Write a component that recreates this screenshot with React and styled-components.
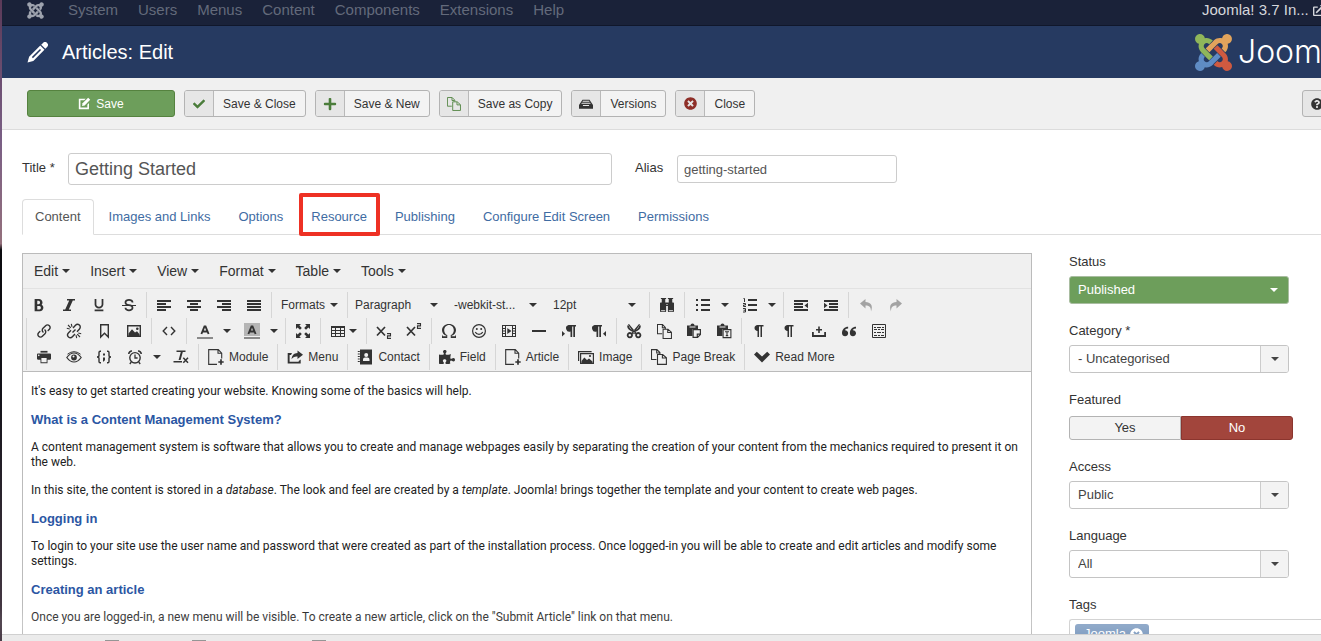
import styled, { createGlobalStyle, css } from "styled-components";
import {
    ImBinoculars,
    ImBold,
    ImLink,
    ImOmega,
    ImPilcrow,
    ImPrinter,
    ImQuotesLeft,
    ImStrikethrough,
    ImUnderline,
} from "react-icons/im";
import {
    FaCheck,
    FaExternalLinkAlt,
    FaJoomla,
    FaPlus,
    FaPuzzlePiece,
    FaQuestionCircle,
    FaTimesCircle,
} from "react-icons/fa";

const GlobalStyle = createGlobalStyle`
    * {
        box-sizing: border-box;
    }
    body {
        margin: 0;
        background: #fff;
        color: #333;
        font: 13px/18px "Liberation Sans", Arial, sans-serif;
    }
    button, input, select {
        margin: 0;
        font: inherit;
        color: inherit;
    }
    a {
        color: inherit;
        text-decoration: none;
    }
`;

/* ---------- frame ---------- */

const Desktop = styled.div`
    display: flex;
    height: 100vh;
    overflow: hidden;
`;

const DesktopEdge = styled.div`
    flex: 0 0 2px;
    background: linear-gradient(
        #5b3a58 0%,
        #7a5f85 22%,
        #94707c 38%,
        #0b0b0f 39%,
        #14131a 62%,
        #4a3c48 100%
    );
`;

const Page = styled.div`
    flex: 1;
    min-width: 0;
    display: flex;
    flex-direction: column;
`;

const NavBar = styled.nav`
    flex: none;
    display: flex;
    align-items: center;
    gap: 20px;
    height: 26px;
    padding: 0 0 5px 24px;
    overflow: hidden;
    white-space: nowrap;
    background: #1a2239;
    border-bottom: 1px solid #10172b;
    font-size: 15px;
    color: #636a7b;
`;

const NavBrand = styled.a`
    display: flex;
    margin-right: 3px;
    color: #9ea3ae;
`;

const NavLink = styled.a`
    line-height: 20px;
`;

const SiteLink = styled.a`
    flex: 0 0 119px;
    display: flex;
    align-items: center;
    gap: 4px;
    margin-left: auto;
    overflow: hidden;
    line-height: 20px;
    color: #d5d7dc;

    svg {
        flex: none;
    }
`;

const Header = styled.header`
    flex: none;
    display: flex;
    align-items: center;
    gap: 14px;
    height: 52px;
    padding-left: 25px;
    background: #263a61;
    color: #fff;
`;

const PageTitle = styled.h1`
    flex: 1;
    margin: 0;
    font-size: 20px;
    font-weight: normal;
    line-height: 24px;
`;

const Logo = styled.div`
    flex: 0 0 126px;
    display: flex;
    align-items: center;
    gap: 6px;
    overflow: hidden;
    font: 300 32px/38px Inter, sans-serif;

    svg {
        flex: none;
    }
`;

const ActionBar = styled.div`
    flex: none;
    display: flex;
    gap: 9px;
    height: 52px;
    padding: 12px 0 0 25px;
    overflow: hidden;
    background: #f0f0f0;
    border-bottom: 1px solid #dcdcdc;
`;

const ActionButton = styled.button`
    flex: none;
    display: flex;
    align-items: stretch;
    height: 27px;
    padding: 0;
    overflow: hidden;
    background: #f3f3f3;
    border: 1px solid #b3b3b3;
    border-radius: 3px;
    font-size: 12px;
    line-height: 26px;
`;

const ActionIcon = styled.span`
    display: flex;
    align-items: center;
    justify-content: center;
    width: 29px;
    background: #e6e6e6;
    border-right: 1px solid #b9b9b9;
    color: ${(props) => props.$color || "#333"};
`;

const ActionText = styled.span`
    padding: 0 9px;
`;

const SaveButton = styled(ActionButton)`
    align-items: center;
    justify-content: center;
    gap: 5px;
    width: 148px;
    background: #6d9e5b;
    border-color: #55823f;
    color: #fff;
`;

const HelpButton = styled(ActionButton)`
    width: 60px;
    margin: 0 -41px 0 auto;
    padding-left: 8px;
    align-items: center;
    background: #e6e6e6;
`;

const Main = styled.main`
    flex: 1;
    min-height: 0;
    padding: 23px 0 0 20px;
    overflow: hidden;
`;

/* ---------- title and tabs ---------- */

const TitleRow = styled.div`
    display: flex;
    align-items: center;
    height: 32px;
`;

const FieldLabel = styled.label`
    width: ${(props) => props.$width};
    padding-bottom: 2px;
`;

const TextInput = styled.input`
    width: 220px;
    height: 28px;
    padding: 0 6px;
    background: #fff;
    border: 1px solid #ccc;
    border-radius: 3px;
    color: #555;

    ${(props) =>
        props.$large &&
        css`
            flex: 0 1 544px;
            height: 32px;
            margin-right: 23px;
            font-size: 18px;
        `}
`;

const Tabs = styled.div`
    display: flex;
    gap: 2px;
    margin-top: 14px;
    border-bottom: 1px solid #ddd;
`;

const Tab = styled.a`
    position: relative;
    padding: 8px 12px;
    margin-bottom: -1px;
    border: 1px solid transparent;
    border-radius: 4px 4px 0 0;
    color: #3f6ca3;

    ${(props) =>
        props.$active &&
        css`
            background: #fff;
            border-color: #ddd #ddd #fff;
            color: #555;
        `}
`;

const Highlight = styled.span`
    position: absolute;
    inset: -7px -1px -2px 0;
    border: 4px solid #ee3124;
    border-radius: 2px;
`;

const Columns = styled.div`
    display: grid;
    grid-template-columns: minmax(0, 1fr) 252px;
    gap: 37px;
    margin-top: 18px;
`;

/* ---------- editor ---------- */

const Editor = styled.section`
    height: 500px;
    border: 1px solid #bbb;
    background: #fff;
`;

const MenuBar = styled.div`
    display: flex;
    gap: 6px;
    padding: 3px 4px 4px;
    background: #f0f0f0;
    border-bottom: 1px solid #e2e2e2;
`;

const MenuButton = styled.button`
    display: flex;
    align-items: center;
    gap: 4px;
    height: 27px;
    padding: 0 7px;
    background: none;
    border: 0;
    font-size: 14px;
`;

const Caret = styled.span`
    flex: none;
    border: 4px solid transparent;
    border-top-color: ${(props) => props.$color || "#333"};
    border-bottom: 0;
`;

const ToolRows = styled.div`
    padding: 3px 0 1px 1px;
    background: #f0f0f0;
    border-bottom: 1px solid #bbb;
`;

const ToolRow = styled.div`
    display: flex;
    height: 26px;
`;

const ToolGroup = styled.div`
    flex: none;
    display: flex;
    align-items: center;

    & + &,
    ${(props) => (props.$ruled ? "&" : "& + &")} {
        margin-left: 2px;
        padding-left: 2px;
        border-left: 1px solid #d6d6d6;
    }
`;

const ToolButton = styled.button`
    display: flex;
    align-items: center;
    justify-content: center;
    width: 30px;
    height: 24px;
    padding: 0;
    background: none;
    border: 0;
    color: ${(props) => (props.$disabled ? "#a3a3a3" : "#333")};
`;

const SplitButton = styled(ToolButton)`
    justify-content: space-between;
    width: ${(props) => (props.$narrow ? "41px" : "47px")};
    padding: 0 ${(props) => (props.$narrow ? "7px" : "5px")} 0
        ${(props) => (props.$narrow ? "7px" : "8px")};
`;

const TextButton = styled(ToolButton)`
    width: auto;
    gap: 5px;
    padding: 0 7px;
    font-size: 12px;
    white-space: nowrap;
`;

const ListBox = styled.span`
    display: grid;
    align-items: center;
    width: 99px;
    padding: 0 11px 0 5px;
    font-size: 12px;

    select,
    ${Caret} {
        grid-area: 1 / 1;
    }
    select {
        width: 100%;
        height: 24px;
        padding: 0 12px 0 0;
        appearance: none;
        background: none;
        border: 0;
        text-overflow: ellipsis;
    }
    ${Caret} {
        justify-self: end;
        pointer-events: none;
    }
`;

const Article = styled.article`
    padding: 12px 8px;
    color: #222;
    font: 12px/15px Tahoma, Roboto, sans-serif;

    p,
    h2 {
        margin: 0 0 13px;
    }
    h2 {
        color: #2b56a3;
        font: bold 13px/15px "Liberation Sans", Arial, sans-serif;
    }
`;

/* ---------- sidebar ---------- */

const Sidebar = styled.aside`
    min-width: 0;
`;

const Control = styled.div`
    margin-bottom: 18px;
`;

const ControlLabel = styled.label`
    display: block;
    margin-bottom: 5px;
`;

const SelectBox = styled.div`
    display: grid;
    grid-template-columns: 1fr 28px;
    width: 220px;
    height: 28px;
    overflow: hidden;
    background: ${(props) => (props.$green ? "#6d9e5b" : "#fff")};
    border: 1px solid ${(props) => (props.$green ? "#a9bda1" : "#c4c4c4")};
    border-radius: 3px;
    color: ${(props) => (props.$green ? "#fff" : "#444")};

    select {
        grid-area: 1 / 1 / 2 / 3;
        padding: 0 8px;
        appearance: none;
        background: none;
        border: 0;
    }
`;

const SelectArrow = styled.span`
    grid-area: 1 / 2;
    display: flex;
    align-items: center;
    justify-content: center;
    pointer-events: none;
    ${(props) =>
        !props.$plain &&
        css`
            background: #f3f3f3;
            border-left: 1px solid #ccc;
        `}
`;

const Switch = styled.div`
    display: flex;
    width: 224px;
    padding-top: 2px;
`;

const SwitchOption = styled.label`
    flex: 1;
    height: 24px;
    border: 1px solid ${(props) => (props.$on ? "#8b352e" : "#b3b3b3")};
    border-radius: ${(props) => (props.$on ? "0 3px 3px 0" : "3px 0 0 3px")};
    background: ${(props) => (props.$on ? "#a2453c" : "#f3f3f3")};
    color: ${(props) => (props.$on ? "#fff" : "#333")};
    line-height: 22px;
    text-align: center;

    input {
        position: absolute;
        opacity: 0;
    }
`;

const TagBox = styled.div`
    padding: 4px 5px;
    height: 36px;
    border: 1px solid #ccc;
    border-right: 0;
    border-radius: 3px 0 0 3px;
`;

const Tag = styled.span`
    display: inline-flex;
    align-items: center;
    gap: 4px;
    height: 20px;
    padding: 0 6px 0 9px;
    background: #7d9bc0;
    border-radius: 3px;
    color: #fff;
`;

const TagRemove = styled.button`
    display: flex;
    padding: 0;
    background: none;
    border: 0;
`;

const StatusBar = styled.footer`
    position: relative;
    flex: none;
    display: flex;
    gap: 73px;
    height: 7px;
    padding: 5px 0 0 103px;
    background: #ebebeb;
    border-top: 1px solid #d0d0d0;
    box-shadow: 0 -15px 15px rgba(255, 255, 255, 0.45);
`;

const StatusDot = styled.span`
    width: 14px;
    height: 1px;
    margin-right: ${(props) => props.$after || "0"};
    background: #959595;
`;

/* ---------- drawings ---------- */

function Glyph({ size = 16, children }) {
    return (
        <svg
            width={size}
            height={size}
            viewBox="0 0 16 16"
            fill="currentColor"
            aria-hidden="true"
        >
            {children}
        </svg>
    );
}

function Lines({ d, width = 1.4 }) {
    return (
        <path d={d} fill="none" stroke="currentColor" strokeWidth={width} />
    );
}

const bars = {
    left: "M1 3h14v2H1zM1 6h9v2H1zM1 9h14v2H1zM1 12h9v2H1z",
    center: "M1 3h14v2H1zM4 6h8v2H4zM1 9h14v2H1zM4 12h8v2H4z",
    right: "M1 3h14v2H1zM6 6h9v2H6zM1 9h14v2H1zM6 12h9v2H6z",
    justify: "M1 3h14v2H1zM1 6h14v2H1zM1 9h14v2H1zM1 12h14v2H1z",
    outdent: "M1 3h14v2H1zM1 6h9v2H1zM1 9h9v2H1zM1 12h14v2H1zM15 5.8v5.4L11.5 8.5z",
    indent: "M1 3h14v2H1zM6 6h9v2H6zM6 9h9v2H6zM1 12h14v2H1zM1 5.8v5.4l3.5-2.7z",
    bullets: "M1 2h2v2H1zM6 2h9v2H6zM1 7h2v2H1zM6 7h9v2H6zM1 12h2v2H1zM6 12h9v2H6z",
};

const Bars = ({ kind }) => (
    <Glyph>
        <path d={bars[kind]} />
    </Glyph>
);

const Numbers = () => (
    <Glyph>
        <path d="M6 2h9v2H6zM6 7h9v2H6zM6 12h9v2H6z" />
        <Lines
            width={1}
            d="M1.5 1.5h1V5M1 6.5h2.5V8h-2v1.5H4M1 11.5h2.5V15H1M1.5 13.2h2"
        />
    </Glyph>
);

const Italic = () => (
    <Glyph>
        <path d="M6 2h8v1.5h-2.2l-4 9H10V14H2v-1.5h2.2l4-9H6z" />
    </Glyph>
);

const Unlink = () => (
    <Glyph>
        <Lines d="M7 5l2.5-2.8a2.6 2.6 0 0 1 4 3.8L11 8.7M9 11l-2.6 2.8a2.6 2.6 0 0 1-4-3.8L5 7.3M6.5 9.5l3-3" />
        <Lines
            width={1.1}
            d="M2 2l2.8 2.8M5.3.8l.7 3M.8 5.3l3 .7M11.2 11.2L14 14M10 12.2l.7 3M12.2 10l3 .7"
        />
    </Glyph>
);

const Bookmark = () => (
    <Glyph>
        <Lines d="M4.7 1.7h7.6v12.4l-3.8-3.8-3.8 3.8z" />
    </Glyph>
);

const Picture = () => (
    <Glyph>
        <Lines d="M1.7 2.7h12.6v10.6H1.7z" />
        <path d="M2.5 13v-2.5L6 6.2l3 3.3 2-1.3 2.5 3V13z" />
        <circle cx="11.3" cy="5.7" r="1.3" />
    </Glyph>
);

const Pictures = () => (
    <Glyph>
        <Lines width={1.2} d="M.6 12V2.6h13M2.6 4.6h12.8v9.8H2.6z" />
        <path d="M3.5 14v-2l2.8-3.6L9 11l2-1.5 3.5 3V14z" />
        <circle cx="12" cy="7" r="1.1" />
    </Glyph>
);

const Code = () => (
    <Glyph>
        <Lines d="M6 4L2.2 8 6 12M10 4l3.8 4-3.8 4" />
    </Glyph>
);

const LetterA = ({ filled }) => (
    <Glyph>
        {filled && <path fill="#b5b5b5" d="M0 0h16v13H0z" />}
        <Lines width={1.9} d="M4.4 11L7.5 3.5h1l3.1 7.5M5.6 8.5h4.8" />
        <path fill="#8a8a8a" d="M0 14h16v2H0z" />
    </Glyph>
);

const Fullscreen = () => (
    <Glyph>
        <path d="M1 1h5L4.4 2.6 6.8 5 5 6.8 2.6 4.4 1 6zM15 1v5l-1.6-1.6L11 6.8 9.2 5l2.4-2.4L10 1zM1 15v-5l1.6 1.6L5 9.2 6.8 11l-2.4 2.4L6 15zM15 15h-5l1.6-1.6L9.2 11 11 9.2l2.4 2.4L15 10z" />
    </Glyph>
);

const TableGrid = () => (
    <Glyph>
        <path
            fillRule="evenodd"
            d="M1 3h14v11H1zM2 5v2h3V5zM6 5v2h4V5zM11 5v2h3V5zM2 8v2h3V8zM6 8v2h4V8zM11 8v2h3V8zM2 11v2h3v-2zM6 11v2h4v-2zM11 11v2h3v-2z"
        />
    </Glyph>
);

const Script = ({ raised }) => (
    <Glyph>
        <Lines width={1.7} d="M1 4l8 8.5M9 4l-8 8.5" />
        <g transform={raised ? "translate(0 -10)" : undefined}>
            <Lines width={1.1} d="M11 10.6h3.5v2.3h-3v2.5H15" />
        </g>
    </Glyph>
);

const Smile = () => (
    <Glyph>
        <circle
            cx="8"
            cy="8"
            r="6.4"
            fill="none"
            stroke="currentColor"
            strokeWidth="1.2"
        />
        <circle cx="5.8" cy="6" r="1" />
        <circle cx="10.2" cy="6" r="1" />
        <Lines width={1.2} d="M4.3 9c1.4 3.2 6 3.2 7.4 0" />
    </Glyph>
);

const Media = () => (
    <Glyph>
        <path
            fillRule="evenodd"
            d="M1 2h14v12H1zM2 3v2h2V3zM2 6v1.5h2V6zM2 8.5V10h2V8.5zM2 11v2h2v-2zM12 3v2h2V3zM12 6v1.5h2V6zM12 8.5V10h2V8.5zM12 11v2h2v-2zM5 3v10h6V3z"
        />
        <path d="M6.3 5v6l4.1-3z" />
    </Glyph>
);

const Rule = () => (
    <Glyph>
        <path d="M1 7h14v2H1z" />
    </Glyph>
);

const Direction = ({ rtl }) => (
    <Glyph>
        <g transform={rtl ? "translate(-4 0)" : undefined}>
            <path d="M7.5 2H15v1.5h-1V14h-1.7V3.5h-1.1V14H9.5V8.6a3.3 3.3 0 0 1-2-6.6z" />
        </g>
        <path d={rtl ? "M15 8v5.4l-3-2.7z" : "M1 8v5.4l3-2.7z"} />
    </Glyph>
);

const Scissors = () => (
    <Glyph>
        <path d="M2 1.5L3 1l7.5 9L9 11.500zM14 1.500L13 1l-7.500 9L7 11.500z" />
        <Lines
            width={1.8}
            d="M3.8 10a2.2 2.2 0 1 0 .1 0zM12.2 10a2.2 2.2 0 1 0 .1 0z"
        />
        <Lines width={1.8} d="M2 2.5q0 4 6 6 6-2 6-6" />
    </Glyph>
);

const Copies = ({ size }) => (
    <Glyph size={size}>
        <Lines
            width={1.1}
            d="M5.5 10.5h-5V.6h5.4l3 3v1.6M5.7.8V4h3M6.5 5.5h5.2l3.7 3.3v6.6H6.5zM11.4 5.7V9h3.8"
        />
    </Glyph>
);

const Clipboard = ({ text }) => (
    <Glyph>
        <path
            fillRule="evenodd"
            d="M1 2.5h3.5a2 2 0 0 1 4 0H12V6H6.5v7H1zM3.5 3.5v1h6v-1z"
        />
        {text ? (
            <Lines
                width={1.1}
                d="M7.1 6.6h7.8v8H7.1zM9 8.8h4M11 8.8V13M9.8 12.6h2.4"
            />
        ) : (
            <Lines
                width={1.2}
                d="M7.1 6.6h7.3v5l-2.8 2.8H7.1zM14 11.2h-2.7v3"
            />
        )}
    </Glyph>
);

const Nonbreaking = () => (
    <Glyph>
        <path d="M1 9h1.8v3h10.4V9H15v5H1zM7.2 10V7.5H5V6h2.2V3.5h1.6V6H11v1.5H8.8V10z" />
    </Glyph>
);

const Template = () => (
    <Glyph>
        <Lines width={1} d="M1.5 1.5h13v13h-13z" />
        <Lines
            width={1}
            d="M3 4.5h2M6 4.5h4M11 4.5h2M3 6.5h3M7 6.5h2M10 6.5h3M3 9.5h2M6 9.5h4M11 9.5h2M3 12.5h3M7 12.5h2M10 12.5h3"
        />
    </Glyph>
);

const Eye = () => (
    <Glyph>
        <Lines
            width={1.2}
            d="M.8 8.500Q4 4 8 4t7.200 4.500Q12 13 8 13T.8 8.500z"
        />
        <Lines width={1} d="M1.5 5.2q6.5-5 13 0" />
        <path
            fillRule="evenodd"
            d="M8 5.600a2.900 2.900 0 1 0 0 5.800 2.900 2.900 0 0 0 0-5.800zM7.500 6.600a1 1 0 1 1 0 2 1 1 0 0 1 0-2z"
        />
    </Glyph>
);

const Braces = () => (
    <Glyph>
        <Lines d="M5 2.2h-.8Q3 2.2 3 3.5v3Q3 8 1 8q2 0 2 1.5v3q0 1.3 1.2 1.3H5M11 2.2h.8q1.2 0 1.2 1.3v3Q13 8 15 8q-2 0-2 1.5v3q0 1.3-1.2 1.3H11" />
        <path d="M7 4.500h2v2H7zM7 8.500h2V11l-1.200 1.600H7z" />
    </Glyph>
);

const Alarm = () => (
    <Glyph>
        <circle
            cx="8"
            cy="8.8"
            r="5.2"
            fill="none"
            stroke="currentColor"
            strokeWidth="1.4"
        />
        <Lines width={1.3} d="M8 5.6V9h2.6M4.3 13l-1.5 2M11.7 13l1.5 2" />
        <Lines width={1.6} d="M1.8 5A3 3 0 0 1 5 2M14.2 5A3 3 0 0 0 11 2" />
    </Glyph>
);

const ClearFormat = () => (
    <Glyph>
        <path d="M3.5 1.5h9v1.600H9.800L7.600 11h-2l2.200-7.900H3.500zM.5 12H9v1.600H.5z" />
        <Lines width={1.5} d="M10.3 8.8l4.7 5M15 8.8l-4.7 5" />
    </Glyph>
);

const NewDoc = () => (
    <Glyph>
        <Lines
            width={1.1}
            d="M9 15.4H.7V.6h9.6l3.4 3.6v5.3M10 .8v3.500h3.500"
        />
        <Lines width={1.7} d="M13 10.3v5.4M10.3 13h5.4" />
    </Glyph>
);

const ShareOut = () => (
    <Glyph>
        <path d="M5 4H.7v10.5h13v-4l-2 1.5v.7H2.600V6H4z" />
        <path d="M10.5 1.5L16 5.8l-5.5 4.3V7.500C7.500 7.300 6 8 4.600 10.300 4.800 6.600 6.800 4.200 10.500 4z" />
    </Glyph>
);

const ContactBook = () => (
    <Glyph>
        <path
            fillRule="evenodd"
            d="M3 .5h12v15H3zM9.2 4a2 2 0 1 0 0 4 2 2 0 0 0 0-4zM6 12h6.5v-1.400q0-2.100-2-2.100H8q-2 0-2 2.100z"
        />
        <Lines width={1.2} d="M.8 2.5h2M.8 5h2M.8 7.5h2M.8 10h2M.8 12.5h2" />
    </Glyph>
);

const ChevronThick = () => (
    <Glyph>
        <path d="M0 5.5l2.800-2.700L8 7.500l5.200-4.700L16 5.500l-8 8z" />
    </Glyph>
);

const Undo = ({ flip }) => (
    <Glyph>
        <path
            transform={flip ? "translate(16 0) scale(-1 1)" : undefined}
            d="M2 6.5L7.5 2v3c5 0 8 3.5 5.5 9.5.2-4.500-2-6-5.500-6v3z"
        />
    </Glyph>
);

const EditBox = () => (
    <Glyph size={13}>
        <path d="M11.5 9.5l2-2V15H1V2h8.500l-2 2H3v9h8.500z" />
        <path d="M5 11l.6-3.200L12.500 1 15 3.500l-6.800 6.900z" />
    </Glyph>
);

const Tray = () => (
    <Glyph size={14}>
        <path
            fillRule="evenodd"
            d="M4 3h8l4 6v4.500H0V9zM4.500 4.300l-.5 1h8l-.5-1zM3.300 6.500l-.7 1.200h10.800l-.7-1.200zM4.500 9v1.200h7V9z"
        />
    </Glyph>
);

const Pencil = () => (
    <Glyph size={21}>
        <path
            fillRule="evenodd"
            d="M10.800 2L12.200.7a2.100 2.100 0 0 1 3.100 3.100L14 5.200zM10.100 2.700l3.200 3.200-8.500 8.500L.4 15.600l1.200-4.400zM9.900 5.300l-6.200 6.200.8.8 6.200-6.200z"
        />
    </Glyph>
);

function JoomlaMark() {
    return (
        <svg width="37" height="37" viewBox="0 32 448 448" aria-hidden="true">
            <path
                fill="#8fb65a"
                d="M.6 92.1C.6 58.8 27.4 32 60.4 32c30 0 54.5 21.9 59.2 50.2 32.6-7.6 67.1.6 96.5 30l-44.3 44.3c-20.5-20.5-42.6-16.3-55.4-3.5-14.3 14.3-14.3 37.9 0 52.2l99.5 99.5-44 44.3c-87.7-87.2-49.7-49.7-99.8-99.7-26.8-26.5-35-64.8-24.8-98.9C20.4 144.6.6 120.7.6 92.1z"
            />
            <path
                fill="#e2a45c"
                d="M130.1 208.5l44.3 44.3c10-10 89.7-89.7 99.7-99.8 14.3-14.3 37.6-14.3 51.9 0 12.8 12.8 17 35-3.5 55.4l44 44.3c31.2-31.2 38.5-67.6 28.9-101.2 29.2-4.1 51.9-29.2 51.9-59.5 0-33.2-26.8-60.1-59.8-60.1-30.3 0-55.4 22.5-59.5 51.6-33.8-9.9-71.7-1.5-98.3 25.1-18.3 19.1-71.1 71.5-99.6 99.9z"
            />
            <path
                fill="#cf5a40"
                d="M396.4 360.7c8.2-32.7-.9-68.5-26.3-93.9-11.8-12.2 5 4.7-99.5-99.7l-44.3 44.3 99.7 99.7c14.3 14.3 14.3 37.6 0 51.9-12.8 12.8-35 17-55.4-3.5l-44 44.3c27.6 30.2 68 38.8 102.7 28 5.5 27.4 29.7 48.1 58.9 48.1 33 0 59.8-26.8 59.8-60.1 0-30.2-22.5-55-51.6-59.1z"
            />
            <path
                fill="#5f8cc4"
                d="M312.1 307.6l-44-44.3c-87 86.4-50.4 50.4-99.7 99.8-14.3 14.3-37.6 14.3-51.9 0-13.1-13.4-16.9-35.3 3.2-55.4l-44-44.3c-30.2 30.2-38 65.2-29.5 98.3-26.7 6-46.2 29.9-46.2 58.2C0 453.2 26.8 480 59.8 480c28.6 0 52.5-19.8 58.6-46.7 32.7 8.2 68.5-.6 94.2-26 32.1-32 12.2-12.4 99.5-99.7z"
            />
        </svg>
    );
}

/* ---------- data ---------- */

const NAV = [
    "System",
    "Users",
    "Menus",
    "Content",
    "Components",
    "Extensions",
    "Help",
];

const ACTIONS = [
    { label: "Save & Close", icon: <FaCheck size={12} />, color: "#4b7d3b" },
    { label: "Save & New", icon: <FaPlus size={14} />, color: "#4b7d3b" },
    { label: "Save as Copy", icon: <Copies size={14} />, color: "#5c8a4c" },
    { label: "Versions", icon: <Tray /> },
    { label: "Close", icon: <FaTimesCircle size={13} />, color: "#8e2f28" },
];

const TABS = [
    "Content",
    "Images and Links",
    "Options",
    "Resource",
    "Publishing",
    "Configure Edit Screen",
    "Permissions",
];

const MENUS = ["Edit", "Insert", "View", "Format", "Table", "Tools"];

const ROW_ONE = [
    [
        ["Bold", <ImBold size={14} />],
        ["Italic", <Italic />],
        ["Underline", <ImUnderline size={14} />],
        ["Strikethrough", <ImStrikethrough size={14} />],
    ],
    [
        ["Align left", <Bars kind="left" />],
        ["Align center", <Bars kind="center" />],
        ["Align right", <Bars kind="right" />],
        ["Justify", <Bars kind="justify" />],
    ],
];

const ROW_ONE_END = [
    [["Find and replace", <ImBinoculars size={14} />]],
    [
        ["Bullet list", <Bars kind="bullets" />, "split"],
        ["Numbered list", <Numbers />, "split"],
    ],
    [
        ["Decrease indent", <Bars kind="outdent" />],
        ["Increase indent", <Bars kind="indent" />],
    ],
    [
        ["Undo", <Undo />, "disabled"],
        ["Redo", <Undo flip />, "disabled"],
    ],
];

const ROW_TWO = [
    [
        ["Insert link", <ImLink size={14} />],
        ["Remove link", <Unlink />],
        ["Anchor", <Bookmark />],
        ["Insert image", <Picture />],
    ],
    [["Source code", <Code />]],
    [
        ["Text color", <LetterA />, "split"],
        ["Background color", <LetterA filled />, "split"],
    ],
    [["Fullscreen", <Fullscreen />]],
    [["Insert table", <TableGrid />, "narrow"]],
    [
        ["Subscript", <Script />],
        ["Superscript", <Script raised />],
    ],
    [
        ["Special character", <ImOmega size={14} />],
        ["Emoticons", <Smile />],
        ["Insert video", <Media />],
        ["Horizontal line", <Rule />],
        ["Left to right", <Direction />],
        ["Right to left", <Direction rtl />],
    ],
    [
        ["Cut", <Scissors />],
        ["Copy", <Copies size={15} />],
        ["Paste", <Clipboard />],
        ["Paste as text", <Clipboard text />],
    ],
    [
        ["Show invisible characters", <ImPilcrow size={12} />],
        ["Show blocks", <ImPilcrow size={12} />],
        ["Nonbreaking space", <Nonbreaking />],
        ["Blockquote", <ImQuotesLeft size={14} />],
        ["Insert template", <Template />],
    ],
];

const ROW_THREE = [
    [
        ["Print", <ImPrinter size={14} />],
        ["Preview", <Eye />],
        ["Insert code sample", <Braces />],
        ["Insert date/time", <Alarm />, "split"],
        ["Clear formatting", <ClearFormat />],
    ],
    [["Module", <NewDoc />, "text"]],
    [["Menu", <ShareOut />, "text"]],
    [["Contact", <ContactBook />, "text"]],
    [["Field", <FaPuzzlePiece size={16} />, "text"]],
    [["Article", <NewDoc />, "text"]],
    [["Image", <Pictures />, "text"]],
    [["Page Break", <Copies size={16} />, "text"]],
    [["Read More", <ChevronThick />, "text"]],
];

const FONT_LISTS = [
    { label: "Block", value: "Paragraph" },
    { label: "Font family", value: "-webkit-st..." },
    { label: "Font size", value: "12pt" },
];

/* ---------- parts ---------- */

function Tool({ label, icon, kind }) {
    if (kind === "text")
        return (
            <TextButton>
                {icon}
                {label}
            </TextButton>
        );
    if (kind === "split" || kind === "narrow")
        return (
            <SplitButton aria-label={label} $narrow={kind === "narrow"}>
                {icon}
                <Caret />
            </SplitButton>
        );
    return (
        <ToolButton
            aria-label={label}
            disabled={kind === "disabled"}
            $disabled={kind === "disabled"}
        >
            {icon}
        </ToolButton>
    );
}

function ToolGroups({ groups, ruled }) {
    return groups.map((group, index) => (
        <ToolGroup key={index} $ruled={ruled}>
            {group.map(([label, icon, kind]) => (
                <Tool key={label} label={label} icon={icon} kind={kind} />
            ))}
        </ToolGroup>
    ));
}

function SelectControl({ id, label, value, green }) {
    return (
        <Control>
            <ControlLabel htmlFor={id}>{label}</ControlLabel>
            <SelectBox $green={green}>
                <select id={id} defaultValue={value}>
                    <option>{value}</option>
                </select>
                <SelectArrow $plain={green}>
                    <Caret $color={green ? "#fff" : "#444"} />
                </SelectArrow>
            </SelectBox>
        </Control>
    );
}

function EditorPanel() {
    return (
        <Editor>
            <MenuBar>
                {MENUS.map((name) => (
                    <MenuButton key={name}>
                        {name}
                        <Caret />
                    </MenuButton>
                ))}
            </MenuBar>
            <ToolRows>
                <ToolRow>
                    <ToolGroups groups={ROW_ONE} />
                    <ToolGroup>
                        <TextButton>
                            Formats
                            <Caret />
                        </TextButton>
                    </ToolGroup>
                    <ToolGroup>
                        {FONT_LISTS.map(({ label, value }) => (
                            <ListBox key={label}>
                                <select aria-label={label} defaultValue={value}>
                                    <option>{value}</option>
                                </select>
                                <Caret />
                            </ListBox>
                        ))}
                    </ToolGroup>
                    <ToolGroups groups={ROW_ONE_END} ruled />
                </ToolRow>
                <ToolRow>
                    <ToolGroups groups={ROW_TWO} ruled />
                </ToolRow>
                <ToolRow>
                    <ToolGroups groups={ROW_THREE} ruled />
                </ToolRow>
            </ToolRows>
            <Article>
                <p>
                    It's easy to get started creating your website. Knowing some
                    of the basics will help.
                </p>
                <h2>What is a Content Management System?</h2>
                <p>
                    A content management system is software that allows you to
                    create and manage webpages easily by separating the creation
                    of your content from the mechanics required to present it on
                    the web.
                </p>
                <p>
                    In this site, the content is stored in a <em>database</em>.
                    The look and feel are created by a <em>template</em>.
                    Joomla! brings together the template and your content to
                    create web pages.
                </p>
                <h2>Logging in</h2>
                <p>
                    To login to your site use the user name and password that
                    were created as part of the installation process. Once
                    logged-in you will be able to create and edit articles and
                    modify some settings.
                </p>
                <h2>Creating an article</h2>
                <p>
                    Once you are logged-in, a new menu will be visible. To
                    create a new article, click on the "Submit Article" link on
                    that menu.
                </p>
            </Article>
        </Editor>
    );
}

function App() {
    return (
        <Desktop>
            <GlobalStyle />
            <DesktopEdge />
            <Page>
                <NavBar>
                    <NavBrand href="#" aria-label="Joomla">
                        <FaJoomla size={19} />
                    </NavBrand>
                    {NAV.map((name) => (
                        <NavLink key={name} href="#">
                            {name}
                        </NavLink>
                    ))}
                    <SiteLink href="#">
                        Joomla! 3.7 In...
                        <FaExternalLinkAlt size={11} />
                    </SiteLink>
                </NavBar>
                <Header>
                    <Pencil />
                    <PageTitle>Articles: Edit</PageTitle>
                    <Logo>
                        <JoomlaMark />
                        Joomla!
                    </Logo>
                </Header>
                <ActionBar>
                    <SaveButton>
                        <EditBox />
                        Save
                    </SaveButton>
                    {ACTIONS.map(({ label, icon, color }) => (
                        <ActionButton key={label}>
                            <ActionIcon $color={color}>{icon}</ActionIcon>
                            <ActionText>{label}</ActionText>
                        </ActionButton>
                    ))}
                    <HelpButton aria-label="Help">
                        <FaQuestionCircle size={12} />
                    </HelpButton>
                </ActionBar>
                <Main>
                    <TitleRow>
                        <FieldLabel htmlFor="title" $width="46px">
                            Title *
                        </FieldLabel>
                        <TextInput
                            id="title"
                            defaultValue="Getting Started"
                            $large
                        />
                        <FieldLabel htmlFor="alias" $width="42px">
                            Alias
                        </FieldLabel>
                        <TextInput id="alias" defaultValue="getting-started" />
                    </TitleRow>
                    <Tabs>
                        {TABS.map((name) => (
                            <Tab key={name} href="#" $active={name === "Content"}>
                                {name}
                                {name === "Resource" && <Highlight />}
                            </Tab>
                        ))}
                    </Tabs>
                    <Columns>
                        <EditorPanel />
                        <Sidebar>
                            <SelectControl
                                id="status"
                                label="Status"
                                value="Published"
                                green
                            />
                            <SelectControl
                                id="category"
                                label="Category *"
                                value="- Uncategorised"
                            />
                            <Control
                                role="radiogroup"
                                aria-labelledby="featured"
                            >
                                <ControlLabel as="span" id="featured">
                                    Featured
                                </ControlLabel>
                                <Switch>
                                    <SwitchOption>
                                        <input type="radio" name="featured" />
                                        Yes
                                    </SwitchOption>
                                    <SwitchOption $on>
                                        <input
                                            type="radio"
                                            name="featured"
                                            defaultChecked
                                        />
                                        No
                                    </SwitchOption>
                                </Switch>
                            </Control>
                            <SelectControl
                                id="access"
                                label="Access"
                                value="Public"
                            />
                            <SelectControl
                                id="language"
                                label="Language"
                                value="All"
                            />
                            <Control>
                                <ControlLabel as="span">Tags</ControlLabel>
                                <TagBox>
                                    <Tag>
                                        Joomla
                                        <TagRemove aria-label="Remove tag">
                                            <FaTimesCircle size={13} />
                                        </TagRemove>
                                    </Tag>
                                </TagBox>
                            </Control>
                        </Sidebar>
                    </Columns>
                </Main>
                <StatusBar>
                    <StatusDot />
                    <StatusDot $after="33px" />
                    <StatusDot />
                </StatusBar>
            </Page>
        </Desktop>
    );
}

export default App;
